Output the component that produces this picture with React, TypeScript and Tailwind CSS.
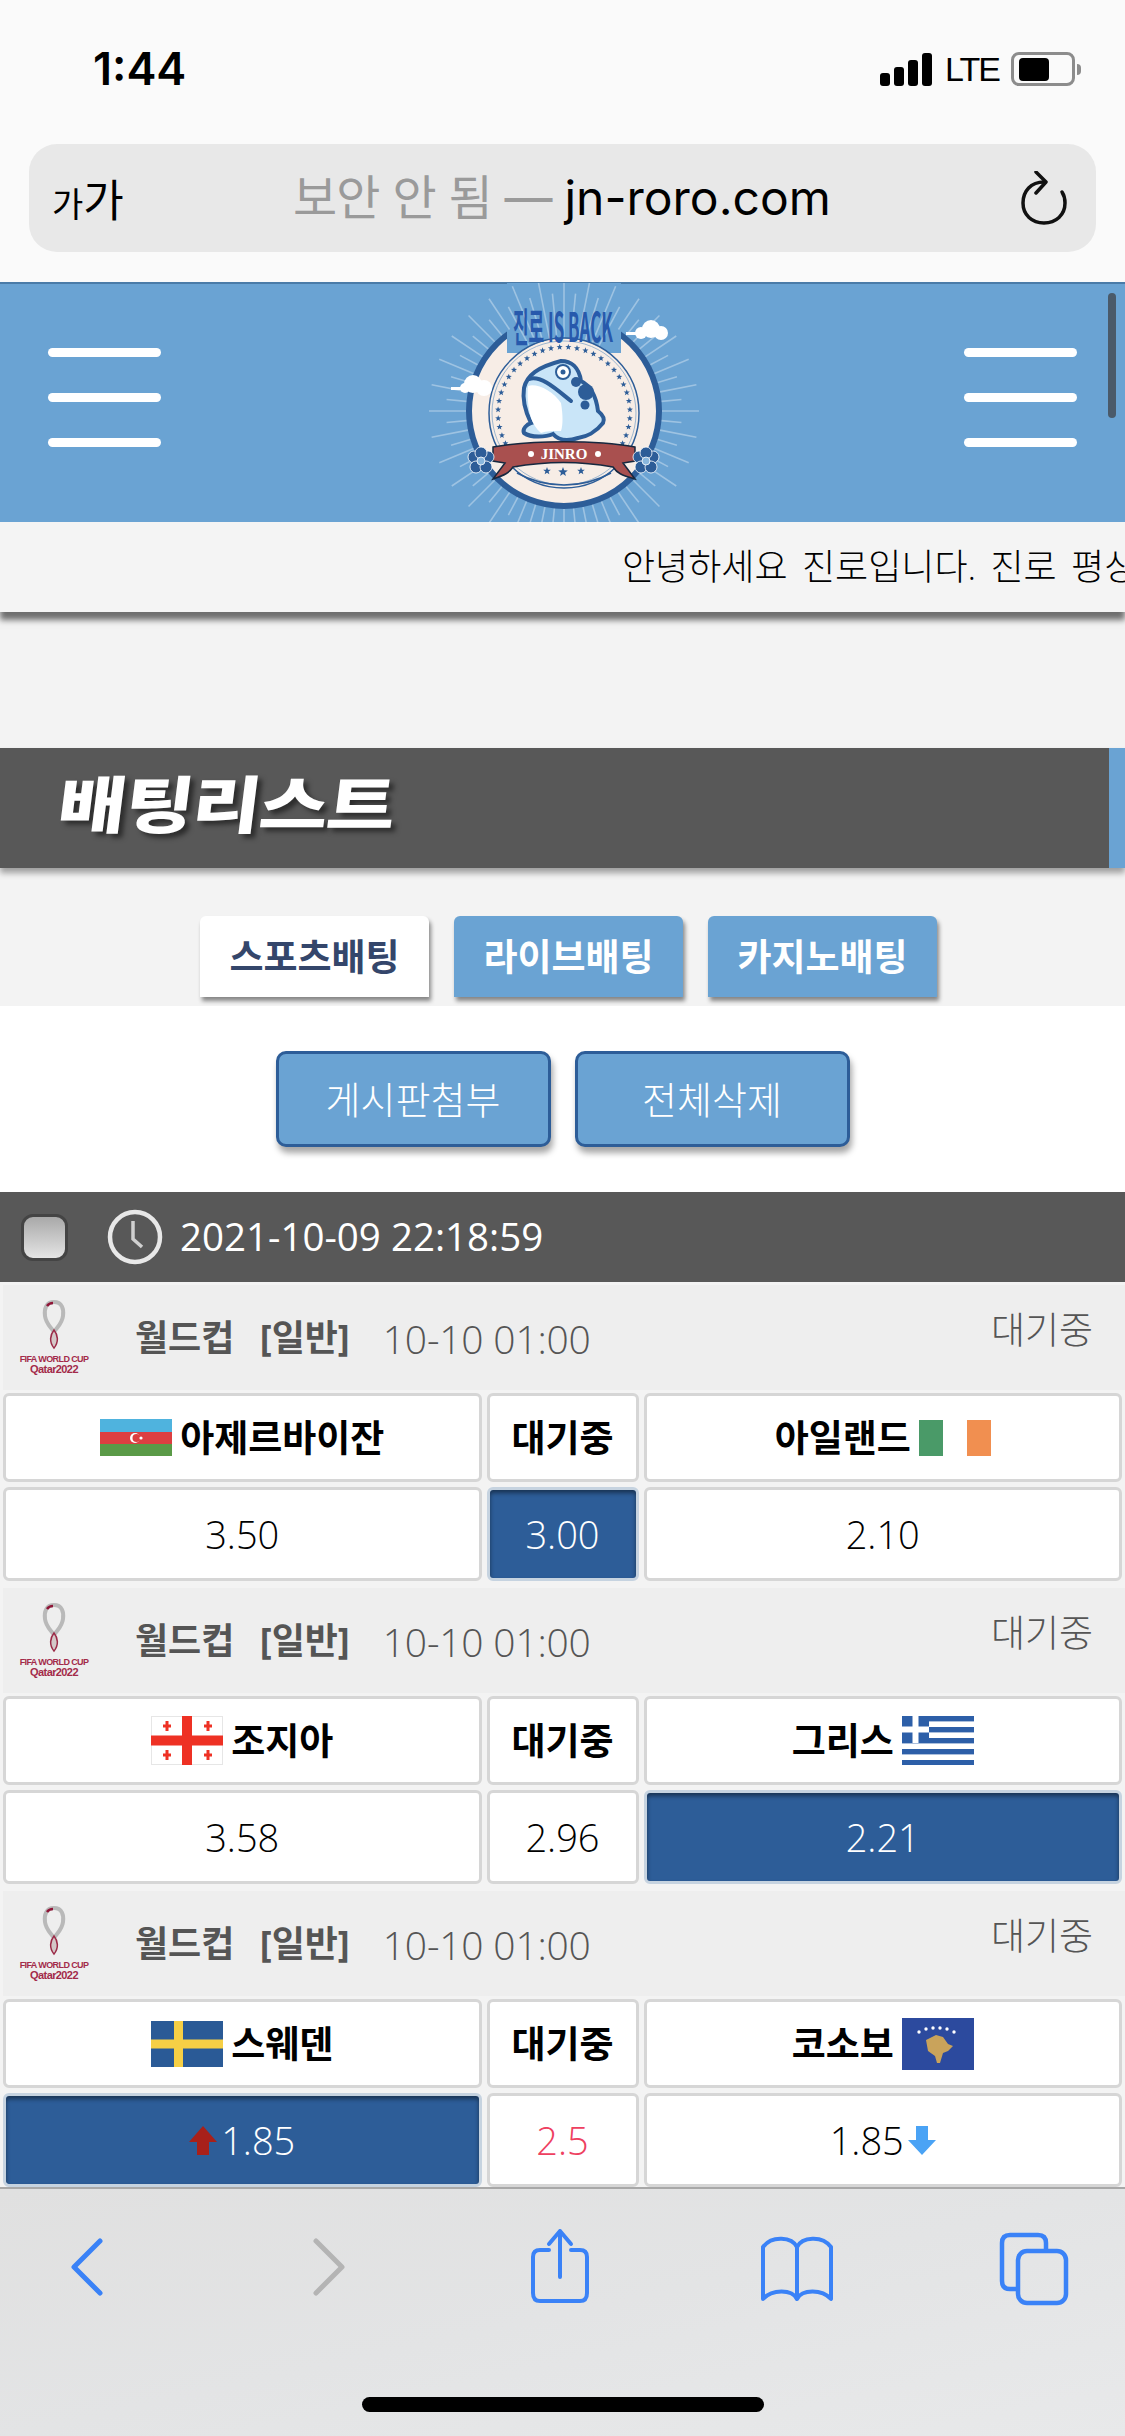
type Flag = 'az' | 'ie' | 'ge' | 'gr' | 'se' | 'xk'

interface ITeam {
    name: string
    flag: Flag
}

interface IMatch {
    home: ITeam
    away: ITeam
    odds: string[]
    picked: number
    drawRed?: boolean
    arrows?: boolean
}

const matches: IMatch[] = [
    { home: { name: '아제르바이잔', flag: 'az' }, away: { name: '아일랜드', flag: 'ie' }, odds: ['3.50', '3.00', '2.10'], picked: 1 },
    { home: { name: '조지아', flag: 'ge' }, away: { name: '그리스', flag: 'gr' }, odds: ['3.58', '2.96', '2.21'], picked: 2 },
    { home: { name: '스웨덴', flag: 'se' }, away: { name: '코소보', flag: 'xk' }, odds: ['1.85', '2.5', '1.85'], picked: 0, drawRed: true, arrows: true },
]

const FlagIcon = ({ flag }: { flag: Flag }) => {
    if (flag === 'az') {
        return (
            <svg width="72" height="37" viewBox="0 0 72 37" className="shrink-0">
                <rect width="72" height="13" fill="#4fb3de" />
                <rect y="13" width="72" height="12" fill="#dc3f41" />
                <rect y="25" width="72" height="12" fill="#5a9a47" />
                <circle cx="35" cy="19" r="5" fill="#fff" />
                <circle cx="36.5" cy="19" r="4" fill="#dc3f41" />
                <circle cx="41" cy="19" r="1.6" fill="#fff" />
            </svg>
        )
    }
    if (flag === 'ie') {
        return (
            <svg width="72" height="36" viewBox="0 0 72 36" className="shrink-0">
                <rect width="24" height="36" fill="#4a9a68" />
                <rect x="48" width="24" height="36" fill="#f18f50" />
            </svg>
        )
    }
    if (flag === 'ge') {
        return (
            <svg width="72" height="49" viewBox="0 0 72 49" className="shrink-0">
                <rect x="0.5" y="0.5" width="71" height="48" fill="#fff" stroke="#e6e6e6" />
                <rect x="31" width="10" height="49" fill="#ee3124" />
                <rect y="19.5" width="72" height="10" fill="#ee3124" />
                {[[16, 10], [57, 10], [16, 39], [57, 39]].map(([x, y]) => (
                    <g key={`${x}-${y}`} fill="#ee3124">
                        <rect x={x - 1.5} y={y - 5} width="3" height="10" />
                        <rect x={x - 4} y={y - 1.5} width="8" height="3" />
                    </g>
                ))}
            </svg>
        )
    }
    if (flag === 'gr') {
        return (
            <svg width="72" height="49" viewBox="0 0 72 49" className="shrink-0">
                <rect width="72" height="49" fill="#fff" />
                {[0, 11, 22, 33, 44].map((y) => (
                    <rect key={y} y={y} width="72" height="5.4" fill="#2d5fa8" />
                ))}
                <rect width="27" height="27" fill="#2d5fa8" />
                <rect x="10.5" width="6" height="27" fill="#fff" />
                <rect y="10.5" width="27" height="6" fill="#fff" />
            </svg>
        )
    }
    if (flag === 'se') {
        return (
            <svg width="72" height="46" viewBox="0 0 72 46" className="shrink-0">
                <rect width="72" height="46" fill="#2a5a96" />
                <rect x="23" width="9" height="46" fill="#f6cf45" />
                <rect y="18.5" width="72" height="9" fill="#f6cf45" />
            </svg>
        )
    }
    return (
        <svg width="72" height="52" viewBox="0 0 72 52" className="shrink-0">
            <rect width="72" height="52" fill="#2c4a9e" />
            <path d="M24 22 L34 17 L41 19 L46 26 L51 28 L46 33 L41 35 L38 45 L35 45 L33 38 L26 33 Z" fill="#c9a35b" />
            {[17, 24, 31, 38, 45, 52].map((x, i) => (
                <circle key={x} cx={x} cy={i === 0 || i === 5 ? 14 : 10 + (i === 1 || i === 4 ? 1 : 0)} r="1.7" fill="#fff" />
            ))}
        </svg>
    )
}

const WorldCupLogo = () => (
    <div className="flex w-[60px] flex-col items-center">
        <svg width="26" height="50" viewBox="0 0 26 50">
            <path d="M13 2 C5 2 3 9 4 16 C5 24 10 27 13 32 C16 27 21 24 22 16 C23 9 21 2 13 2 Z" fill="none" stroke="#b9b9b9" strokeWidth="4" />
            <path d="M6 6 C8 3 10 3 12 3" fill="none" stroke="#8f1537" strokeWidth="2.5" />
            <path d="M13 30 C9 35 8 42 13 48 C18 42 17 35 13 30 Z" fill="#d4c8c8" stroke="#9b2a47" strokeWidth="1.5" />
        </svg>
        <span className="mt-[5px] whitespace-nowrap font-['Liberation_Sans',sans-serif] text-[9px] leading-[9px] font-bold tracking-[-0.6px] text-[#a32a49]">FIFA WORLD CUP</span>
        <span className="whitespace-nowrap font-['Liberation_Sans',sans-serif] text-[11px] leading-[10px] font-bold tracking-[-0.6px] text-[#a32a49]">Qatar2022</span>
    </div>
)

const ArrowUp = () => (
    <svg width="28" height="29" viewBox="0 0 28 29" className="shrink-0">
        <path d="M14 0 L28 16 L20 16 L20 29 L8 29 L8 16 L0 16 Z" fill="#a8201a" />
    </svg>
)

const ArrowDown = () => (
    <svg width="28" height="29" viewBox="0 0 28 29" className="shrink-0">
        <path d="M8 0 L20 0 L20 14 L28 14 L14 29 L0 14 L8 14 Z" fill="#4aa3f5" />
    </svg>
)

const MatchGroup = ({ match }: { match: IMatch }) => (
    <div className="flex flex-col pb-[7px]">
        <div className="ml-[3px] flex h-[105px] items-start bg-[#eeeeee] pl-[21px]">
            <div className="mt-[15px]">
                <WorldCupLogo />
            </div>
            <span className="ml-[51px] mt-[28px] text-[36px] leading-[50px] font-bold text-[#555555] [word-spacing:16px]">월드컵 [일반]</span>
            <span className="ml-[33px] mt-[29px] text-[39px] leading-[50px] font-light tracking-[-0.2px] text-[#555555]">10-10 01:00</span>
            <span className="ml-auto mr-[32px] mt-[20px] text-[37px] leading-[50px] font-light text-[#555555]">대기중</span>
        </div>
        <div className="mt-[3px] grid grid-cols-[1fr_152px_1fr] gap-x-[5px] gap-y-[5px] px-[3px]">
            <div className="flex h-[89px] items-center justify-center gap-[8px] rounded-[6px] border-[3px] border-[#d6d6d6] bg-white">
                <FlagIcon flag={match.home.flag} />
                <span className="text-[37px] font-bold text-black">{match.home.name}</span>
            </div>
            <div className="flex h-[89px] items-center justify-center rounded-[6px] border-[3px] border-[#d6d6d6] bg-white text-[37px] font-bold text-black">대기중</div>
            <div className="flex h-[89px] items-center justify-center gap-[8px] rounded-[6px] border-[3px] border-[#d6d6d6] bg-white">
                <span className="text-[37px] font-bold text-black">{match.away.name}</span>
                <FlagIcon flag={match.away.flag} />
            </div>
            {match.odds.map((odd, i) => {
                const picked = match.picked === i
                return (
                    <div
                        key={i}
                        className={
                            picked
                                ? "flex h-[94px] items-center justify-center gap-[4px] rounded-[6px] border-[3px] border-[#c6d3e0] bg-[#2d5d98] text-[38px] font-light text-white shadow-[inset_0_3px_4px_rgba(0,0,0,0.45)]"
                                : "flex h-[94px] items-center justify-center gap-[4px] rounded-[6px] border-[3px] border-[#d6d6d6] bg-white text-[38px] font-light text-black"
                        }
                    >
                        {match.arrows && i === 0 && <ArrowUp />}
                        <span className={match.drawRed && i === 1 ? 'text-[#ee4060]' : ''}>{odd}</span>
                        {match.arrows && i === 2 && <ArrowDown />}
                    </div>
                )
            })}
        </div>
    </div>
)

const Hamburger = () => (
    <div className="mb-[12px] flex w-[113px] flex-col gap-[36px]">
        <div className="h-[9px] rounded-full bg-white" />
        <div className="h-[9px] rounded-full bg-white" />
        <div className="h-[9px] rounded-full bg-white" />
    </div>
)

const starPoints = (cx: number, cy: number, r: number) =>
    Array.from({ length: 10 }, (_, i) => {
        const a = (i * Math.PI) / 5 - Math.PI / 2
        const d = i % 2 ? r * 0.42 : r
        return `${cx + Math.cos(a) * d},${cy + Math.sin(a) * d}`
    }).join(' ')

const Logo = () => {
    const rays = Array.from({ length: 64 }, (_, i) => (i * Math.PI * 2) / 64)
    const stars = Array.from({ length: 34 }, (_, i) => ((i * 250) / 33 + 145) * (Math.PI / 180))
    return (
        <svg width="340" height="240" viewBox="12 0 340 240" className="shrink-0">
            <circle cx="183" cy="128" r="95" fill="#f7ede6" stroke="#2d5d98" strokeWidth="6" />
            <path d="M126 0 H240 V70 H126 Z" fill="#6aa3d3" />
            {rays.map((a, i) => {
                const top = Math.sin(a) < 0 && Math.abs(Math.cos(a)) < 0.55
                const from = top ? 70 : 98
                const to = i % 2 ? 118 : 135
                return (
                    <line
                        key={i}
                        x1={183 + Math.cos(a) * from}
                        y1={128 + Math.sin(a) * from}
                        x2={183 + Math.cos(a) * to}
                        y2={128 + Math.sin(a) * to}
                        stroke="#ffffff"
                        strokeOpacity="0.35"
                        strokeWidth="1.6"
                    />
                )
            })}
            <circle cx="183" cy="130" r="75" fill="#f7ede6" stroke="#2d5d98" strokeWidth="1.5" />
            <circle cx="183" cy="130" r="72" fill="none" stroke="#9db6cf" strokeWidth="1" />
            {stars.map((a, i) => (
                <polygon key={i} points={starPoints(183 + Math.cos(a) * 66, 130 + Math.sin(a) * 66, 3.2)} fill="#2d5d98" />
            ))}
            <path
                d="M143 105 C146 92 157 84 180 78 C190 78 198 84 200 98 C210 103 215 112 217 128 C222 132 224 136 222 140 C215 149 205 154 197 155 C188 158 178 158 172 151 C165 154 150 155 143 150 C141 146 146 141 150 140 C145 130 141 118 143 105 Z"
                fill="#c9e5f8"
                stroke="#2d5d98"
                strokeWidth="4"
            />
            <path d="M147 103 C156 100 172 108 180 120 C182 132 182 142 180 148 C172 148 165 148 160 150 C155 146 152 140 150 135 C147 125 146 112 147 103 Z" fill="#ffffff" />
            <path d="M148 96 C160 92 175 106 190 118" fill="none" stroke="#2d5d98" strokeWidth="4" strokeLinecap="round" />
            <circle cx="182" cy="89" r="7" fill="#fff" stroke="#2d5d98" strokeWidth="2" />
            <circle cx="182" cy="89" r="2.5" fill="#2d5d98" />
            <circle cx="195" cy="99" r="5" fill="#2d5d98" />
            <circle cx="205" cy="109" r="8" fill="#2d5d98" />
            <circle cx="204" cy="122" r="4.5" fill="#2d5d98" />
            <path d="M136 190 C165 206 201 206 230 190" fill="none" stroke="#2d5d98" strokeWidth="1.5" />
            <polygon points={starPoints(166, 188, 4)} fill="#2d5d98" />
            <polygon points={starPoints(182, 189, 5)} fill="#2d5d98" />
            <polygon points={starPoints(200, 188, 4)} fill="#2d5d98" />
            <path d="M112 164 C150 157 216 157 254 164 L254 178 L242 180 L254 196 C240 192 236 190 232 184 C200 178 165 178 132 184 C128 190 124 192 112 196 L124 180 L112 178 Z" fill="#a9504f" stroke="#16283f" strokeWidth="1.5" />
            <text x="183" y="176" textAnchor="middle" fontFamily="Liberation Serif, serif" fontSize="15" fontWeight="700" fill="#ffffff">JINRO</text>
            <circle cx="150" cy="171" r="3" fill="#fff" />
            <circle cx="217" cy="171" r="3" fill="#fff" />
            <text x="182" y="59" textAnchor="middle" textLength="100" lengthAdjust="spacingAndGlyphs" fontFamily="Noto Sans CJK KR, sans-serif" fontSize="40" fontWeight="700" fill="#2759ac">진로 IS BACK</text>
            {[[100, 178], [265, 178]].map(([x, y]) => (
                <g key={x} fill="#2d5d98" stroke="#ffffff" strokeWidth="0.8">
                    <circle cx={x - 7} cy={y - 4} r="6" />
                    <circle cx={x + 7} cy={y - 4} r="6" />
                    <circle cx={x - 5} cy={y + 6} r="6" />
                    <circle cx={x + 5} cy={y + 6} r="6" />
                    <circle cx={x} cy={y - 8} r="6" />
                    <circle cx={x} cy={y} r="4" fill="#8ab7dd" />
                </g>
            ))}
            <g fill="#ffffff">
                <circle cx="92" cy="101" r="9" />
                <circle cx="103" cy="105" r="8" />
                <circle cx="84" cy="105" r="5" />
                <rect x="70" y="104" width="25" height="3" />
            </g>
            <g fill="#ffffff">
                <circle cx="270" cy="46" r="9" />
                <circle cx="280" cy="50" r="7" />
                <circle cx="260" cy="50" r="6" />
                <rect x="245" y="49" width="30" height="3" />
            </g>
        </svg>
    )
}

const BottomIcons = () => (
    <div className="flex justify-between pl-[46px] pr-[51px]">
        <svg width="80" height="80" viewBox="0 0 80 80" fill="none" stroke="#3a82f7" strokeWidth="5" strokeLinecap="round" strokeLinejoin="round">
            <path d="M54 14 L28 40 L54 66" />
        </svg>
        <svg width="80" height="80" viewBox="0 0 80 80" fill="none" stroke="#b4b4b4" strokeWidth="5" strokeLinecap="round" strokeLinejoin="round">
            <path d="M33 14 L59 40 L33 66" />
        </svg>
        <svg width="80" height="80" viewBox="0 0 80 80" fill="none" stroke="#3a82f7" strokeWidth="4" strokeLinecap="round" strokeLinejoin="round">
            <path d="M29 23 H20 Q13 23 13 30 V66 Q13 74 20 74 H60 Q67 74 67 66 V30 Q67 23 60 23 H51" />
            <path d="M40 50 V4 M29 17 L40 4 L51 17" />
        </svg>
        <svg width="80" height="80" viewBox="0 0 80 80" fill="none" stroke="#3a82f7" strokeWidth="4" strokeLinejoin="round">
            <path d="M40 20 C35 10 15 8 6 20 V72 C15 62 35 62 40 72 C45 62 65 62 74 72 V20 C65 8 45 10 40 20 Z M40 20 V72" />
        </svg>
        <svg width="80" height="80" viewBox="0 0 80 80" fill="none" stroke="#3a82f7" strokeWidth="4.5">
            <path d="M24 62 H16 Q8 62 8 54 V16 Q8 8 16 8 H44 Q52 8 52 16 V24" />
            <rect x="24" y="24" width="48" height="52" rx="9" />
        </svg>
    </div>
)

export default function App() {
    return (
        <div className="flex h-[2436px] w-[1125px] flex-col overflow-hidden bg-[#f3f3f3] font-['Open_Sans','Noto_Sans_CJK_KR',sans-serif]">
            {/* browser chrome */}
            <div className="flex h-[282px] shrink-0 flex-col bg-[#fafafa]">
                <div className="flex h-[144px] items-start justify-between pl-[93px] pr-[44px] pt-[47px]">
                    <span className="font-['Inter',sans-serif] text-[45px] leading-[44px] font-semibold text-black">1:44</span>
                    <div className="flex items-center pt-[5px]">
                        <div className="flex h-[33px] items-end gap-[4px]">
                            <div className="h-[13px] w-[10px] rounded-[3px] bg-black" />
                            <div className="h-[19px] w-[10px] rounded-[3px] bg-black" />
                            <div className="h-[26px] w-[10px] rounded-[3px] bg-black" />
                            <div className="h-[33px] w-[10px] rounded-[3px] bg-black" />
                        </div>
                        <span className="ml-[13px] w-[52px] font-['Liberation_Sans',sans-serif] text-[34px] leading-[33px] tracking-[-2px] text-black">LTE</span>
                        <div className="ml-[14px] flex h-[34px] w-[64px] items-center rounded-[8px] border-[3px] border-[#8c8c8c] pl-[5px]">
                            <div className="h-[23px] w-[30px] rounded-[4px] bg-black" />
                        </div>
                        <div className="ml-[2px] h-[11px] w-[4px] rounded-r-full bg-[#8c8c8c]" />
                    </div>
                </div>
                <div className="mx-[29px] flex h-[108px] items-center rounded-[28px] bg-[#e8e8e8] pl-[23px] pr-[29px]">
                    <span className="w-[241px] font-['Noto_Sans_CJK_KR',sans-serif] leading-none text-black">
                        <span className="text-[34px]">가</span>
                        <span className="text-[44px]">가</span>
                    </span>
                    <span className="flex-1 whitespace-nowrap font-['Inter','Noto_Sans_CJK_KR',sans-serif] text-[48px] leading-[60px] text-black">
                        <span className="tracking-[-0.8px] text-[#9a9a9a]">보안 안 됨 — </span>jn-roro.com
                    </span>
                    <svg width="46" height="54" viewBox="0 0 46 54" fill="none" stroke="#111111" strokeWidth="3.5" strokeLinecap="round" strokeLinejoin="round">
                        <path d="M23 11 C10 11 2 20 2 32 C2 44 11 52 23 52 C35 52 44 44 44 32 C44 27 43 24 41 21" />
                        <path d="M15 1 L25 11 L15 22" />
                    </svg>
                </div>
            </div>

            {/* site header */}
            <div className="relative flex h-[240px] shrink-0 items-center justify-between border-t-[2px] border-[#4a7ba8] bg-[#6aa3d3] px-[48px]">
                <Hamburger />
                <Logo />
                <Hamburger />
                <div className="absolute right-[9px] top-[9px] h-[125px] w-[8px] rounded-full bg-[#4a5a6a]" />
            </div>

            {/* notice */}
            <div className="flex h-[90px] shrink-0 items-center overflow-hidden bg-[#f4f4f4] pl-[622px] shadow-[0_8px_6px_rgba(0,0,0,0.55)]">
                <span className="whitespace-nowrap text-[36px] font-light text-black [word-spacing:5px]">안녕하세요 진로입니다. 진로 평상시</span>
            </div>

            <div className="h-[136px] shrink-0" />

            {/* title */}
            <div className="flex h-[120px] shrink-0 items-stretch bg-[#585858] shadow-[0_5px_6px_rgba(0,0,0,0.35)]">
                <div className="flex flex-1 items-center pb-[14px] pl-[59px]">
                    <span className="inline-block origin-left -skew-x-6 scale-x-[1.2] font-['Noto_Sans_CJK_KR',sans-serif] text-[62px] leading-none font-black tracking-[-1px] text-white [text-shadow:4px_4px_5px_rgba(0,0,0,0.5)]">배팅리스트</span>
                </div>
                <div className="w-[16px] bg-[#6aa3d3]" />
            </div>

            {/* tabs */}
            <div className="flex h-[138px] shrink-0 items-start justify-center gap-[25px] pl-[12px] pt-[48px]">
                <div className="flex h-[81px] w-[229px] items-center justify-center rounded-t-[6px] bg-white text-[37px] font-bold text-[#34466b] shadow-[2px_4px_4px_rgba(0,0,0,0.45)]">스포츠배팅</div>
                <div className="flex h-[81px] w-[229px] items-center justify-center rounded-t-[6px] bg-[#6aa3d3] text-[37px] font-bold text-white shadow-[2px_4px_4px_rgba(0,0,0,0.45)]">라이브배팅</div>
                <div className="flex h-[81px] w-[229px] items-center justify-center rounded-t-[6px] bg-[#6aa3d3] text-[37px] font-bold text-white shadow-[2px_4px_4px_rgba(0,0,0,0.45)]">카지노배팅</div>
            </div>

            {/* main */}
            <div className="flex min-h-0 flex-1 flex-col overflow-hidden bg-white">
                <div className="flex h-[186px] shrink-0 items-start justify-center gap-[24px] pt-[45px]">
                    <div className="flex h-[96px] w-[275px] items-center justify-center rounded-[10px] border-[3px] border-[#2d5d98] bg-[#6aa3d3] text-[38px] font-light text-white shadow-[2px_6px_6px_rgba(0,0,0,0.35)]">게시판첨부</div>
                    <div className="flex h-[96px] w-[275px] items-center justify-center rounded-[10px] border-[3px] border-[#2d5d98] bg-[#6aa3d3] text-[38px] font-light text-white shadow-[2px_6px_6px_rgba(0,0,0,0.35)]">전체삭제</div>
                </div>
                <div className="flex h-[90px] shrink-0 items-center bg-[#585858] pl-[21px]">
                    <div className="h-[47px] w-[47px] rounded-[12px] border-[3px] border-[#444444] bg-gradient-to-b from-[#a9a9a9] to-[#e5e5e5]" />
                    <svg width="56" height="56" viewBox="0 0 56 56" fill="none" stroke="#e8e8e8" strokeWidth="4.5" className="ml-[39px]">
                        <circle cx="28" cy="28" r="25" />
                        <path d="M26 12 V30 L35 38" stroke="#d0d0d0" strokeWidth="3.5" />
                    </svg>
                    <span className="ml-[17px] text-[38.5px] text-white">2021-10-09 22:18:59</span>
                </div>
                <div className="h-[3px] shrink-0 bg-[#f3f3f3]" />
                <div className="flex min-h-0 flex-1 flex-col overflow-hidden bg-[#f3f3f3]">
                    {matches.map((match) => (
                        <MatchGroup key={match.home.name} match={match} />
                    ))}
                </div>
            </div>

            {/* toolbar */}
            <div className="flex h-[249px] shrink-0 flex-col border-t-[2px] border-[#a8a8a8] bg-gradient-to-br from-[#e0e0e0] via-[#e3e4e5] to-[#e8e9ea] pt-[38px]">
                <BottomIcons />
                <div className="mx-auto mt-[90px] h-[15px] w-[402px] rounded-full bg-black" />
            </div>
        </div>
    )
}
